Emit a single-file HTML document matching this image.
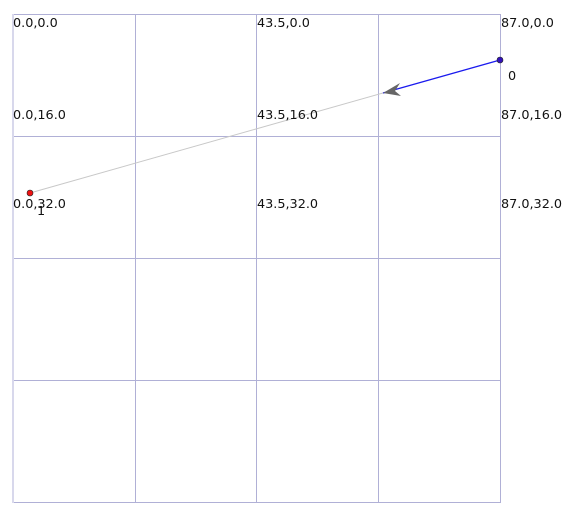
<!DOCTYPE html>
<html><head><style>
html,body{margin:0;padding:0;background:#fff;width:570px;height:516px;overflow:hidden}
text{font-family:"DejaVu Sans","Liberation Sans",sans-serif;font-size:12.8px;fill:#111}
</style></head><body>
<svg width="570" height="516" xmlns="http://www.w3.org/2000/svg">
<g stroke="#b0b0d6" stroke-width="1">
<line x1="13.5" y1="14" x2="13.5" y2="503"/>
<line x1="135.5" y1="14" x2="135.5" y2="503"/>
<line x1="256.5" y1="14" x2="256.5" y2="503"/>
<line x1="378.5" y1="14" x2="378.5" y2="503"/>
<line x1="500.5" y1="14" x2="500.5" y2="503"/>
<line x1="13" y1="14.5" x2="501" y2="14.5"/>
<line x1="13" y1="136.5" x2="501" y2="136.5"/>
<line x1="13" y1="258.5" x2="501" y2="258.5"/>
<line x1="13" y1="380.5" x2="501" y2="380.5"/>
<line x1="13" y1="502.5" x2="501" y2="502.5"/>
</g>
<line x1="13" y1="14" x2="13" y2="503" stroke="#d8d8ec" stroke-width="2"/>
<line x1="30" y1="193" x2="383" y2="93" stroke="#c8c8c8" stroke-width="1"/>
<line x1="500" y1="60" x2="383" y2="93" stroke="#1a1aee" stroke-width="1.3"/>
<path d="M383,93 L400,83 L395,91 L401,96 Z" fill="#666"/>
<circle cx="500" cy="60" r="3" fill="#3311bb" stroke="#222" stroke-width="0.6"/>
<circle cx="30" cy="193" r="3" fill="#ee1111" stroke="#222" stroke-width="0.6"/>
<text x="13" y="27">0.0,0.0</text>
<text x="257" y="27">43.5,0.0</text>
<text x="501" y="27">87.0,0.0</text>
<text x="13" y="119">0.0,16.0</text>
<text x="257" y="119">43.5,16.0</text>
<text x="501" y="119">87.0,16.0</text>
<text x="13" y="208">0.0,32.0</text>
<text x="257" y="208">43.5,32.0</text>
<text x="501" y="208">87.0,32.0</text>
<text x="508" y="80">0</text>
<text x="37" y="215">1</text>
</svg>
</body></html>
